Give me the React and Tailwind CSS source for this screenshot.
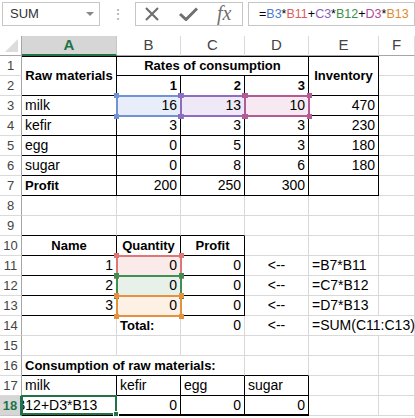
import React from "react";

// highlight colours for referenced cells (fill + border)
const HL = {
  blue: { fill: "bg-[#e8eef9]", line: "border-[#6f93d6]", dot: "bg-[#6f93d6]" },
  purple: { fill: "bg-[#efe9f7]", line: "border-[#8f6cc0]", dot: "bg-[#8f6cc0]" },
  pink: { fill: "bg-[#f7e9f1]", line: "border-[#b55a92]", dot: "bg-[#b55a92]" },
  red: { fill: "bg-[#fbeaea]", line: "border-[#de7676]", dot: "bg-[#de7676]" },
  green: { fill: "bg-[#e7f1e9]", line: "border-[#3f8f52]", dot: "bg-[#3f8f52]" },
  orange: { fill: "bg-[#fdf0e4]", line: "border-[#e5913f]", dot: "bg-[#e5913f]" },
};

function Cell({ children, bold, align = "l", span = "", br, bb, bt, hl, className = "" }) {
  const h = hl ? HL[hl] : null;
  let just = "justify-start pl-[3px]";
  if (align === "r") just = "justify-end pr-[3px]";
  if (align === "c") just = "justify-center";
  return (
    <div
      className={`relative flex items-center whitespace-nowrap border-r border-b ${
        br ? "border-r-black" : "border-r-[#d9d9d9]"
      } ${bb ? "border-b-black" : "border-b-[#d9d9d9]"} ${bt ? "border-t border-t-black" : ""} ${just} ${span} ${
        bold ? "font-bold text-[13px]" : "text-[14px]"
      } ${h ? h.fill : ""} ${className}`}
    >
      {h && (
        <div className={`absolute -top-[1px] -left-[1px] -right-[2px] -bottom-[2px] border-2 ${h.line} z-10`}>
          <span className={`absolute -top-[4px] -left-[4px] w-[5px] h-[5px] ${h.dot}`} />
          <span className={`absolute -top-[4px] -right-[4px] w-[5px] h-[5px] ${h.dot}`} />
          <span className={`absolute -bottom-[4px] -left-[4px] w-[5px] h-[5px] ${h.dot}`} />
          <span className={`absolute -bottom-[4px] -right-[4px] w-[5px] h-[5px] ${h.dot}`} />
        </div>
      )}
      <span className="relative z-20">{children}</span>
    </div>
  );
}

function RowHead({ n, active }) {
  return (
    <div
      className={`flex items-center justify-center border-b border-r text-[13px] ${
        active
          ? "bg-[#d6d6d6] text-[#217346] font-bold border-r-2 border-r-[#217346] border-b-[#c6c6c6]"
          : "text-[#444] border-b-[#dadada] border-r-[#a6a6a6]"
      }`}
    >
      {n}
    </div>
  );
}

function ColHead({ l, active }) {
  return (
    <div
      className={`flex items-center justify-center text-[15px] border-r border-b ${
        active
          ? "bg-[#d6d6d6] text-[#217346] font-bold border-b-2 border-b-[#217346] border-r-[#c6c6c6]"
          : "text-[#444] border-r-[#dadada] border-b-[#a6a6a6]"
      }`}
    >
      {l}
    </div>
  );
}

export default function App() {
  return (
    <div className="w-[415px] h-[418px] overflow-hidden bg-white font-['Liberation_Sans',Arial,sans-serif] text-black">
      {/* formula bar */}
      <div className="h-[36px] flex items-start pt-[2px] pl-[2px]">
        <div className="w-[98px] h-[24px] border border-[#c6c6c6] flex items-center justify-between pl-[7px] pr-[5px] text-[13px] text-[#333]">
          <span>SUM</span>
          <span className="w-0 h-0 border-l-[4px] border-r-[4px] border-t-[4px] border-l-transparent border-r-transparent border-t-[#888]" />
        </div>
        <div className="w-[35px] h-[24px] flex items-center justify-center text-[#aaa] text-[14px]">⋮</div>
        <div className="w-[108px] h-[24px] border border-[#c6c6c6] flex items-center gap-[19px] pl-[8px]">
          <svg width="16" height="14" viewBox="0 0 16 14">
            <path d="M2 1 L14 13 M14 1 L2 13" stroke="#707070" strokeWidth="2.2" fill="none" />
          </svg>
          <svg width="19" height="14" viewBox="0 0 19 14">
            <path d="M1 7 L7 12.5 L18 1.5" stroke="#707070" strokeWidth="3" fill="none" />
          </svg>
          <span className="font-['Liberation_Serif',serif] italic text-[20px] text-[#707070] leading-none -mt-[2px]">fx</span>
        </div>
        <div className="flex-1 h-[24px] ml-[5px] border border-[#c6c6c6] flex items-center pl-[10px] text-[12.5px] whitespace-nowrap overflow-hidden">
          <span>=</span>
          <span className="text-[#4a7bd0]">B3</span>
          <span>*</span>
          <span className="text-[#e05c5c]">B11</span>
          <span>+</span>
          <span className="text-[#8b5fbf]">C3</span>
          <span>*</span>
          <span className="text-[#3c8f4a]">B12</span>
          <span>+</span>
          <span className="text-[#b04a9a]">D3</span>
          <span>*</span>
          <span className="text-[#e08a2e]">B13</span>
        </div>
      </div>

      {/* sheet grid */}
      <div className="grid grid-cols-[22px_95px_64px_64px_64px_70px_1fr] auto-rows-[20px]">
        {/* column headers */}
        <div className="relative border-r border-b border-r-[#a6a6a6] border-b-[#a6a6a6]">
          <span className="absolute right-[3px] bottom-[3px] w-0 h-0 border-l-[12px] border-t-[12px] border-l-transparent border-t-transparent border-b-0 border-r-0 border-[#dcdcdc] border-b-[#dcdcdc]" />
          <svg className="absolute right-[3px] bottom-[3px]" width="13" height="13" viewBox="0 0 13 13">
            <path d="M13 0 L13 13 L0 13 Z" fill="#dcdcdc" />
          </svg>
        </div>
        <ColHead l="A" active />
        <ColHead l="B" />
        <ColHead l="C" />
        <ColHead l="D" />
        <ColHead l="E" />
        <ColHead l="F" />

        {/* row 1 */}
        <RowHead n="1" />
        <Cell span="row-span-2" align="c" bold bt br bb>Raw materials</Cell>
        <Cell span="col-span-3" align="c" bold bt br bb>Rates of consumption</Cell>
        <Cell span="row-span-2" align="c" bold bt br bb>Inventory</Cell>
        <Cell />

        {/* row 2 */}
        <RowHead n="2" />
        <Cell align="r" bold br bb>1</Cell>
        <Cell align="r" bold br bb>2</Cell>
        <Cell align="r" bold br bb>3</Cell>
        <Cell />

        {/* row 3 */}
        <RowHead n="3" />
        <Cell br bb>milk</Cell>
        <Cell align="r" br bb hl="blue">16</Cell>
        <Cell align="r" br bb hl="purple">13</Cell>
        <Cell align="r" br bb hl="pink">10</Cell>
        <Cell align="r" br bb>470</Cell>
        <Cell />

        {/* row 4 */}
        <RowHead n="4" />
        <Cell br bb>kefir</Cell>
        <Cell align="r" br bb>3</Cell>
        <Cell align="r" br bb>3</Cell>
        <Cell align="r" br bb>3</Cell>
        <Cell align="r" br bb>230</Cell>
        <Cell />

        {/* row 5 */}
        <RowHead n="5" />
        <Cell br bb>egg</Cell>
        <Cell align="r" br bb>0</Cell>
        <Cell align="r" br bb>5</Cell>
        <Cell align="r" br bb>3</Cell>
        <Cell align="r" br bb>180</Cell>
        <Cell />

        {/* row 6 */}
        <RowHead n="6" />
        <Cell br bb>sugar</Cell>
        <Cell align="r" br bb>0</Cell>
        <Cell align="r" br bb>8</Cell>
        <Cell align="r" br bb>6</Cell>
        <Cell align="r" br bb>180</Cell>
        <Cell />

        {/* row 7 */}
        <RowHead n="7" />
        <Cell bold br bb>Profit</Cell>
        <Cell align="r" br bb>200</Cell>
        <Cell align="r" br bb>250</Cell>
        <Cell align="r" br bb>300</Cell>
        <Cell br bb />
        <Cell />

        {/* row 8 */}
        <RowHead n="8" />
        <Cell />
        <Cell />
        <Cell />
        <Cell />
        <Cell />
        <Cell />

        {/* row 9 */}
        <RowHead n="9" />
        <Cell bb />
        <Cell bb />
        <Cell bb />
        <Cell />
        <Cell />
        <Cell />

        {/* row 10 */}
        <RowHead n="10" />
        <Cell align="c" bold br bb>Name</Cell>
        <Cell align="c" bold br bb>Quantity</Cell>
        <Cell align="c" bold br bb>Profit</Cell>
        <Cell />
        <Cell />
        <Cell />

        {/* row 11 */}
        <RowHead n="11" />
        <Cell align="r" br bb>1</Cell>
        <Cell align="r" br bb hl="red">0</Cell>
        <Cell align="r" br bb>0</Cell>
        <Cell align="c">&lt;--</Cell>
        <Cell>=B7*B11</Cell>
        <Cell />

        {/* row 12 */}
        <RowHead n="12" />
        <Cell align="r" br bb>2</Cell>
        <Cell align="r" br bb hl="green">0</Cell>
        <Cell align="r" br bb>0</Cell>
        <Cell align="c">&lt;--</Cell>
        <Cell>=C7*B12</Cell>
        <Cell />

        {/* row 13 */}
        <RowHead n="13" />
        <Cell align="r" br bb>3</Cell>
        <Cell align="r" br bb hl="orange">0</Cell>
        <Cell align="r" br bb>0</Cell>
        <Cell align="c">&lt;--</Cell>
        <Cell>=D7*B13</Cell>
        <Cell />

        {/* row 14 */}
        <RowHead n="14" />
        <Cell />
        <Cell bold>Total:</Cell>
        <Cell align="r">0</Cell>
        <Cell align="c">&lt;--</Cell>
        <Cell span="col-span-2">=SUM(C11:C13)</Cell>

        {/* row 15 */}
        <RowHead n="15" />
        <Cell />
        <Cell />
        <Cell />
        <Cell />
        <Cell />
        <Cell />

        {/* row 16 */}
        <RowHead n="16" />
        <Cell span="col-span-3" bold bb>Consumption of raw materials:</Cell>
        <Cell bb />
        <Cell />
        <Cell />

        {/* row 17 */}
        <RowHead n="17" />
        <Cell br bb>milk</Cell>
        <Cell br bb>kefir</Cell>
        <Cell br bb>egg</Cell>
        <Cell br bb>sugar</Cell>
        <Cell />
        <Cell />

        {/* row 18 */}
        <RowHead n="18" active />
        <div className="relative overflow-visible border-r border-b border-r-black border-b-black border-b-2">
          <div className="absolute inset-0 overflow-hidden flex items-center text-[14px] whitespace-nowrap">
            <span className="-ml-[6px]">B12+D3*B13</span>
          </div>
          <div className="absolute -top-[1px] -left-[1px] -right-[1px] -bottom-[1px] border-2 border-[#217346] z-10">
            <span className="absolute -bottom-[4px] -right-[4px] w-[6px] h-[6px] bg-[#217346] border border-white" />
          </div>
        </div>
        <Cell align="r" br bb className="border-b-2">0</Cell>
        <Cell align="r" br bb className="border-b-2">0</Cell>
        <Cell align="r" br bb className="border-b-2">0</Cell>
        <Cell />
        <Cell />
      </div>
    </div>
  );
}
